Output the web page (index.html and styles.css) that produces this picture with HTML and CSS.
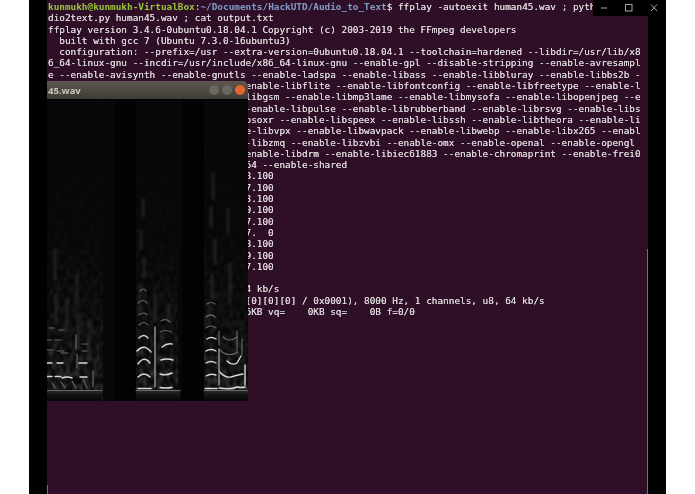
FILE: index.html
```html
<!DOCTYPE html>
<html lang="en">
<head>
<meta charset="utf-8">
<title>ffplay human45.wav</title>
<link rel="stylesheet" href="styles.css">
</head>
<body>
<div class="photo">
  <div class="bezel"></div>
  <main class="terminal">
<pre class="output"><span class="user">kunmukh@kunmukh-VirtualBox</span>:<span class="path">~/Documents/HackUTD/Audio_to_Text</span>$ ffplay -autoexit human45.wav ; pyth
dio2text.py human45.wav ; cat output.txt
ffplay version 3.4.6-0ubuntu0.18.04.1 Copyright (c) 2003-2019 the FFmpeg developers
  built with gcc 7 (Ubuntu 7.3.0-16ubuntu3)
  configuration: --prefix=/usr --extra-version=0ubuntu0.18.04.1 --toolchain=hardened --libdir=/usr/lib/x8
6_64-linux-gnu --incdir=/usr/include/x86_64-linux-gnu --enable-gpl --disable-stripping --enable-avresampl
e --enable-avisynth --enable-gnutls --enable-ladspa --enable-libass --enable-libbluray --enable-libbs2b -
                                   enable-libflite --enable-libfontconfig --enable-libfreetype --enable-l
                                   libgsm --enable-libmp3lame --enable-libmysofa --enable-libopenjpeg --e
                                   -enable-libpulse --enable-librubberband --enable-librsvg --enable-libs
                                   psoxr --enable-libspeex --enable-libssh --enable-libtheora --enable-li
                                   e-libvpx --enable-libwavpack --enable-libwebp --enable-libx265 --enabl
                                   -libzmq --enable-libzvbi --enable-omx --enable-openal --enable-opengl
                                   enable-libdrm --enable-libiec61883 --enable-chromaprint --enable-frei0
                                   64 --enable-shared
                                   8.100
                                   7.100
                                   3.100
                                   0.100
                                   7.100
                                   7.  0
                                   8.100
                                   9.100
                                   7.100

                                   4 kb/s
                                   [0][0][0] / 0x0001), 8000 Hz, 1 channels, u8, 64 kb/s
                                   6KB vq=    0KB sq=    0B f=0/0</pre>
    <div class="scroll-mark scroll-left"></div>
    <div class="scroll-mark scroll-right"></div>
  </main>
  <div class="bezel"></div>

  <div class="window-controls">
    <svg class="control-icons" width="73" height="16" viewBox="0 0 73 16">
      <path d="M8 8h6" />
      <rect x="32.5" y="4.500" width="6.500" height="6.500" />
      <path d="M58 4.500l6 6.500M64 4.500l-6 6.500" />
    </svg>
  </div>

  <section class="player">
    <header class="player-title">
      <span class="player-name">45.wav</span>
      <span class="dot dot-grey"></span>
      <span class="dot dot-grey"></span>
      <span class="dot dot-close"></span>
    </header>
    <svg class="spectrogram" width="201" height="302" viewBox="0 0 201 302">
      <defs>
        <filter id="grain" x="0" y="0" width="100%" height="100%">
          <feTurbulence type="fractalNoise" baseFrequency="0.3 0.14" numOctaves="2" seed="7"/>
          <feColorMatrix type="matrix" values="0 0 0 0 1  0 0 0 0 1  0 0 0 0 1  1.8 0 0 0 -0.7"/>
          <feGaussianBlur stdDeviation="0.8"/>
        </filter>
        <filter id="soft" x="-20%" y="-20%" width="140%" height="140%">
          <feGaussianBlur stdDeviation="0.7"/>
        </filter>
        <filter id="softer" x="-30%" y="-10%" width="160%" height="120%">
          <feGaussianBlur stdDeviation="1.5"/>
        </filter>
        <linearGradient id="rise" x1="0" y1="0" x2="0" y2="1">
          <stop offset="0" stop-color="#fff" stop-opacity="0.01"/>
          <stop offset="0.45" stop-color="#fff" stop-opacity="0.04"/>
          <stop offset="0.72" stop-color="#fff" stop-opacity="0.14"/>
          <stop offset="1" stop-color="#fff" stop-opacity="0.36"/>
        </linearGradient>
        <linearGradient id="floor" x1="0" y1="0" x2="0" y2="1">
          <stop offset="0" stop-color="#2a2a2a"/>
          <stop offset="0.35" stop-color="#141414"/>
          <stop offset="1" stop-color="#070707"/>
        </linearGradient>
        <mask id="voice">
          <rect x="0" y="0" width="56" height="302" fill="url(#rise)"/>
          <rect x="89" y="0" width="42" height="302" fill="url(#rise)"/>
          <rect x="157" y="0" width="44" height="302" fill="url(#rise)"/>
        </mask>
      </defs>
      <rect class="spec-bg" width="201" height="302"/>
      <rect class="spec-band" x="0" y="0" width="68" height="302"/>
      <rect class="spec-band" x="89" y="0" width="46" height="302"/>
      <rect class="spec-band" x="157" y="0" width="44" height="302"/>
      <rect class="spec-grain" width="201" height="302" filter="url(#grain)" mask="url(#voice)"/>

      <g class="faint" filter="url(#softer)">
        <path d="M8 150V180M9 195V225M20 200V232M30 176V205M31 215V250M42 222V262"/>
        <path d="M96 100V118M94 132V150M97 160V178M93 186V215"/>
        <path d="M166 75V100M164 108V128M168 140V165M165 175V200M162 205V226"/>
        <path d="M181 110V135M183 165V205M108 195V222M122 205V222"/>
      </g>

      <g class="mid" filter="url(#soft)">
        <path d="M0 241h5M8 241h6M35 245h6M0 251h6M10 252h7M35 252h5M2 229h5M12 231h5"/>
        <path d="M29 236v14M30 255v14M14 254h7M5 284l3 5M14 283l4 6M25 282l4 7M36 280l4 9M46 272v16"/>
        <path d="M92 226q5-5 9 0M92 216q5-4 8 0M91 204q5-5 9 0M93 192q4-4 6 0"/>
        <path d="M113 233q6-3 11 0M114 222q5-3 9 1"/>
        <path d="M159 229q5-4 10 0M159 218q5-4 9 0M160 205q4-3 8 0M172 232v14M190 232v20M195 240v16"/>
        <path d="M173 251q8 8 18 2M176 238q6 6 14 0"/>
      </g>

      <path class="base-line" d="M0 291.500h55M89 291.500h44M157 291.500h44"/>

      <g class="bright" filter="url(#soft)">
        <path d="M0 277.500h5M8 277.500h6M15 279q5-2 10 0M33 278h7M10 264h6M0 264h5M32 264h8"/>
        <path d="M91 289.500h13M113 288.500q5 1 12 0M158 289.500h12M172 289q12 2 18-1q4 1 8 0"/>
        <path d="M91 278q6-6 12 0M91 265q6-9 12-1M90 252q7-8 14 1M92 239q5-5 9 0"/>
        <path class="bright-stem" d="M108 228v60"/>
        <path d="M113 275q6 2 12-1M114 261q6-2 12 0M115 248q5-4 10-3"/>
        <path d="M159 277q5-3 10-1M159 264q5-3 10 0M159 252q5-3 10 0M160 240q4-3 9 0"/>
        <path d="M172 272q5 7 12 6q6-2 12-3M180 262q5 5 10 2l4-7M198 266v20"/>
        <path class="bright-stem" d="M172 250v36"/>
      </g>

      <rect class="spec-floor" x="0" y="292" width="55" height="10"/>
      <rect class="spec-floor" x="89" y="292" width="44" height="10"/>
      <rect class="spec-floor" x="157" y="292" width="44" height="10"/>
    </svg>
  </section>
</div>
</body>
</html>
```

FILE: styles.css
```css
html, body {
  margin: 0;
  padding: 0;
  background: #fff;
}

.photo {
  position: relative;
  display: flex;
  width: 695px;
  height: 494px;
  padding: 0 29px;
  box-sizing: border-box;
  overflow: hidden;
  background: #fff;
}

.bezel {
  flex: 0 0 18px;
  background: #000;
}

.terminal {
  position: relative;
  flex: 0 0 601px;
  background: #2f0f27;
  overflow: hidden;
}

.output {
  margin: 0;
  padding: 1px 0 0 1px;
  font-family: "DejaVu Sans Mono", "Liberation Mono", monospace;
  font-size: 9.39px;
  line-height: 11.29px;
  color: #dcd7da;
  white-space: pre;
  filter: blur(0.4px);
  text-shadow: 0 0 0.5px #dcd7da;
}

.user {
  color: #9ac53f;
  font-weight: 700;
  text-shadow: none;
}

.path {
  color: #7f9cc8;
  font-weight: 700;
  text-shadow: none;
}

.scroll-mark {
  position: absolute;
  bottom: 0;
  width: 1px;
  background: #7c6c78;
}

.scroll-left {
  left: 0;
  height: 9px;
}

.scroll-right {
  right: 0;
  height: 245px;
}

.window-controls {
  position: absolute;
  top: 0;
  left: 593px;
  width: 73px;
  height: 16px;
  background: #000;
}

.control-icons {
  display: block;
  fill: none;
  stroke: #a8a8a8;
  stroke-width: 1;
}

.player {
  position: absolute;
  top: 81px;
  left: 47px;
  width: 201px;
  height: 320px;
  background: #000;
  border-radius: 0 5px 0 0;
  overflow: hidden;
}

.player-title {
  display: flex;
  align-items: center;
  gap: 3px;
  height: 18px;
  padding: 0 3px 0 1px;
  box-sizing: border-box;
  background: linear-gradient(#5c584f, #3f3d38);
}

.player-name {
  flex: 1;
  font-family: "Noto Sans", "Open Sans", sans-serif;
  font-size: 9.5px;
  font-weight: 700;
  color: #c9c5b9;
  filter: blur(0.4px);
}

.dot {
  width: 10px;
  height: 10px;
  border-radius: 50%;
  filter: blur(0.5px);
}

.dot-grey {
  background: #6b695f;
}

.dot-close {
  background: #e5642b;
}

.spectrogram {
  display: block;
}

.spec-bg {
  fill: #020202;
}

.spec-band {
  fill: #070707;
}

.spec-grain {
  fill: #fff;
}

.faint,
.mid,
.bright,
.base-line {
  fill: none;
  stroke-linecap: round;
}

.faint {
  stroke: #2c2c2c;
  stroke-width: 2;
}

.mid {
  stroke: #666;
  stroke-width: 1.2;
}

.bright {
  stroke: #d8d8d8;
  stroke-width: 1.4;
}

.bright .bright-stem {
  stroke: #8f8f8f;
  stroke-width: 1.5;
}

.base-line {
  stroke: #666;
  stroke-width: 1.2;
}

.spec-floor {
  fill: url(#floor);
}
```
